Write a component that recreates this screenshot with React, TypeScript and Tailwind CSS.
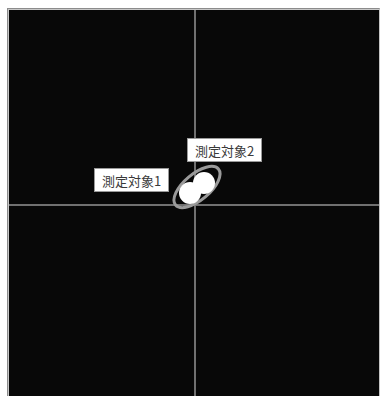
const LABELS = [
  { text: "測定対象1", left: 85, top: 158 },
  { text: "測定対象2", left: 178, top: 128 },
];

function Plot() {
  return (
    <svg width={370} height={390} className="block">
      {/* crosshair */}
      <rect x={185} y={0} width={2} height={390} fill="#707070" />
      <rect x={0} y={194} width={370} height={2} fill="#707070" />

      {/* tolerance ring */}
      <ellipse
        cx={188}
        cy={177}
        rx={28}
        ry={13}
        transform="rotate(-40 188 177)"
        fill="none"
        stroke="#9a9a9a"
        strokeWidth={3}
      />

      {/* measured points */}
      <circle cx={181} cy={183} r={11} fill="#ffffff" />
      <circle cx={195} cy={173} r={11} fill="#ffffff" />
    </svg>
  );
}

export default function App() {
  return (
    <div className="w-[381px] h-[396px] overflow-hidden bg-white pl-[7px] pt-[8px]">
      <div className="w-[373px] border-t border-l border-r border-t-[#8c8c8c] border-l-[#8c8c8c] border-r-[#c4c4c4]">
        <div className="border-t border-l border-[#c8c8c8] border-r-0 border-b-0">
          <div className="relative w-[370px] h-[390px] bg-[#080808]">
            <Plot />
            {LABELS.map((l) => (
              <div
                key={l.text}
                className="absolute w-[75px] h-[24px] flex items-center pl-[7px] bg-white border border-[#9a9a9a] text-[13px] leading-none text-[#3a3a3a] font-['Noto_Sans_CJK_JP',sans-serif]"
                style={{ left: l.left, top: l.top }}
              >
                {l.text}
              </div>
            ))}
          </div>
        </div>
      </div>
    </div>
  );
}
